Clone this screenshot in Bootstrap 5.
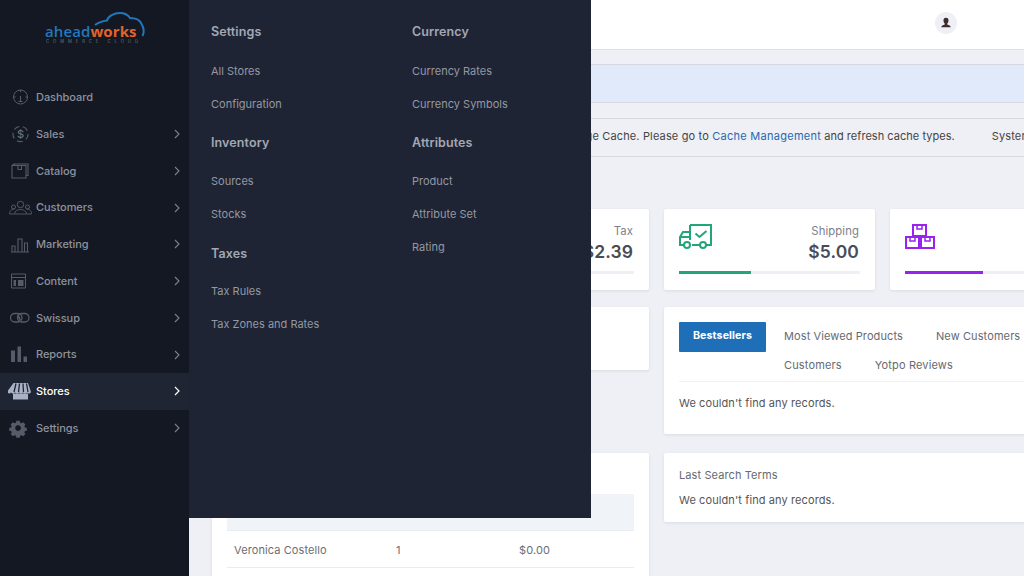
<!DOCTYPE html>
<html lang="en">
<head>
<meta charset="utf-8">
<title>Dashboard</title>
<link href="https://cdn.jsdelivr.net/npm/bootstrap@5.3.0/dist/css/bootstrap.min.css" rel="stylesheet">
<style>
html,body{height:100%;overflow:hidden}
body{font-family:Inter,"Liberation Sans",sans-serif;background:#eef0f5;color:#555;font-size:11px;width:1024px;height:576px;position:relative;letter-spacing:.1px}
.side-rail{width:189px;height:576px;background:#141822;color:#8e929e}
.logo-box{height:79px;padding:10px 0 0 43px}
.logo-box svg{display:block}
.rail-item{height:36.75px;padding-left:36px;padding-right:8px;position:relative;font-size:11px;font-weight:500;letter-spacing:-.05px}
.rail-item.on{background:#1f2533;color:#fff}
.rail-ico{position:absolute;left:8px;top:50%;transform:translateY(-50%);width:24px;height:24px}
.chev{margin-left:auto;width:8px;height:10px}
.fly-menu{position:absolute;left:189px;top:0;width:402px;height:518px;background:#1e2433;z-index:5;padding:0 22px}
.fly-col{width:201px;flex:none}
.fly-head{font-size:12.5px;font-weight:600;color:#a4a8b4;height:38px;line-height:37px}
.fly-head.first{height:62px;line-height:64px;margin-bottom:-7.5px}
.fly-link{height:33px;line-height:33px;color:#9498a3;font-size:11px;white-space:nowrap;letter-spacing:0}
.fly-head.mid{margin-top:3px;margin-bottom:3px}
.fly-head.third{line-height:39px}
.work{position:absolute;left:189px;top:0;width:835px;overflow:hidden;height:576px}
.top-strip{height:50px;background:#fff;border-bottom:1px solid #dfe1e6;position:relative}
.avatar{position:absolute;left:746px;top:12px;width:22px;height:22px;border-radius:50%;background:#eef0f5}
.note{height:39px;line-height:35px;border-top:1px solid #d6d9df;border-bottom:1px solid #d6d9df;white-space:nowrap;font-size:11px;color:#444;overflow:hidden}
.note.blue{background:#e0eafb;margin-top:14px;margin-bottom:15px}
.note a{color:#2668b0;text-decoration:none;letter-spacing:.27px}
.note-run{padding-left:383px;letter-spacing:.15px}
.note-tail{letter-spacing:.03px}
.note-sys{margin-left:37px}
.stats{display:grid;grid-template-columns:repeat(4,211px);gap:15px;margin:52px 0 17px 23px;height:81px}
.pane{background:#fff;border-radius:2px;box-shadow:0 1px 3px rgba(40,50,70,.1);border:0}
.stat{padding:15px;height:81px;display:flex;flex-direction:column}
.stat-top{height:47px;display:flex;justify-content:space-between}
.stat-lbl{font-size:11.3px;color:#80808a;line-height:15px;text-align:right;margin-right:1px}
.stat-val{font-size:17.5px;font-weight:600;color:#4a4c55;line-height:26px;text-align:right;margin-right:1px}
.meter{height:3px;background:#eff0f5}
.meter div{height:3px}
.twin{display:grid;grid-template-columns:437px 437px;gap:15px;margin-left:23px}
.tab-on{background:#1f6fb8;color:#fff;font-weight:700;width:87px;height:30px;line-height:28px;text-align:center;border-radius:1px;flex:none;font-size:10.7px}
.tab-list{padding-left:18px;width:335px;column-gap:33px}
.tab-list span{height:29px;line-height:27px;color:#666a72;white-space:nowrap}
.tab-list span.a1{height:30px;line-height:28px}
.tab-list span.a2{letter-spacing:.15px}
.tbl{width:407px;margin:41px 15px 0 15px;table-layout:fixed;font-size:11px}
.tbl th{background:#f0f3f8;height:36px;font-weight:500;padding:0 7px;color:#777;border-bottom:1px solid #e9ecf2}
.tbl td{height:37px;padding:3px 7px 0;color:#6d6d74;border-bottom:1px solid #e9ecf2}
.rec-line{border-top:1px solid #f0f1f4;padding-top:13px;line-height:16px;color:#555}
.search-pane{height:69px;padding:15px;margin-top:4px}
.search-title{line-height:15px;color:#666a72}
.search-text{line-height:16px;margin-top:9px;color:#555}
.tabs-pane{height:127px;padding:15px}
.first-pane{height:63px}
.orders-pane{height:200px;margin-top:4px}
</style>
</head>
<body>
<div class="d-flex">
<aside class="side-rail flex-shrink-0">
  <div class="logo-box">
    <svg width="104" height="36" viewBox="0 0 104 36">
      <path d="M52 15C56 12 60 11 64 10.500C65 6 71 3 77 3C82 3 85 5 87 8C92 8 97 10 98.500 14C101 18 101 23 99.500 26" fill="none" stroke="#1f78bd" stroke-width="2"/>
      <text x="2" y="26.500" font-family="'Open Sans',sans-serif" font-size="15" font-weight="600" fill="#2277bd">ahead<tspan fill="#e2632c" font-weight="700">works</tspan></text>
      <text x="3" y="32.800" font-family="Inter,sans-serif" font-size="4.200" fill="#6d7480" textLength="92">COMMERCE CLOUD</text>
    </svg>
  </div>
  <ul class="list-unstyled m-0">
    <li class="rail-item d-flex align-items-center">
      <svg class="rail-ico" viewBox="0 0 24 24" fill="none" stroke="#555b68"><circle cx="12.500" cy="12" r="7"/><path d="M12.500 5v2M5.500 12h2M17.500 12h2M12.500 11v5M10.500 16.500h4" stroke-width="1.100"/></svg>Dashboard</li>
    <li class="rail-item d-flex align-items-center">
      <svg class="rail-ico" viewBox="0 0 24 24" fill="none" stroke="#555b68"><circle cx="12.500" cy="12" r="7.600" stroke-dasharray="6 3.500" stroke-width="1.200"/><text x="12.500" y="16" font-size="11" text-anchor="middle" fill="#6a707c" stroke="none" font-family="Inter,sans-serif">$</text></svg>Sales<svg class="chev" viewBox="0 0 8 10" fill="none" stroke="#7d818c" stroke-width="1.100"><path d="M2 1l4 4-4 4"/></svg></li>
    <li class="rail-item d-flex align-items-center">
      <svg class="rail-ico" viewBox="0 0 24 24" fill="none" stroke="#555b68" stroke-width="1.100"><path d="M4 6.500h14v12.500H4zM6 6.500V5h14v11.500h-2M4 6.500L6 5M10 6.500v4h3.500v-4"/></svg>Catalog<svg class="chev" viewBox="0 0 8 10" fill="none" stroke="#7d818c" stroke-width="1.100"><path d="M2 1l4 4-4 4"/></svg></li>
    <li class="rail-item d-flex align-items-center">
      <svg class="rail-ico" viewBox="0 0 24 24" fill="none" stroke="#555b68"><circle cx="12.500" cy="8.500" r="3.200"/><circle cx="5.500" cy="11" r="2"/><circle cx="19.500" cy="11" r="2"/><path d="M6.500 18c0-6 12-6 12 0zM1.500 18c0-4 3-5 5-5M23.500 18c0-4-3-5-5-5M1.500 18h5M18.500 18h5" stroke-width=".9"/></svg>Customers<svg class="chev" viewBox="0 0 8 10" fill="none" stroke="#7d818c" stroke-width="1.100"><path d="M2 1l4 4-4 4"/></svg></li>
    <li class="rail-item d-flex align-items-center">
      <svg class="rail-ico" viewBox="0 0 24 24" fill="none" stroke="#555b68" stroke-width="1.100"><path d="M3 20h18M4 20v-6h3v6M10 20V7h4v13M16.500 20v-9h3v9"/></svg>Marketing<svg class="chev" viewBox="0 0 8 10" fill="none" stroke="#7d818c" stroke-width="1.100"><path d="M2 1l4 4-4 4"/></svg></li>
    <li class="rail-item d-flex align-items-center">
      <svg class="rail-ico" viewBox="0 0 24 24" fill="none" stroke="#555b68"><path d="M3.500 5h14v14h-14zM3.500 8.500h14"/><path d="M5.500 11h2.500v6H5.500zM10 11h5.500v6H10z" fill="#555b68" stroke="none"/></svg>Content<svg class="chev" viewBox="0 0 8 10" fill="none" stroke="#7d818c" stroke-width="1.100"><path d="M2 1l4 4-4 4"/></svg></li>
    <li class="rail-item d-flex align-items-center">
      <svg class="rail-ico" viewBox="0 0 24 24" fill="none" stroke="#555b68" stroke-width="1.300"><rect x="2.500" y="7.500" width="11.500" height="8.500" rx="4.200"/><rect x="9.500" y="7.500" width="11.500" height="8.500" rx="4.200"/><path d="M9.700 9c1.500 1.500 2.500 4 2.500 5.500z" fill="#555b68"/></svg>Swissup<svg class="chev" viewBox="0 0 8 10" fill="none" stroke="#7d818c" stroke-width="1.100"><path d="M2 1l4 4-4 4"/></svg></li>
    <li class="rail-item d-flex align-items-center">
      <svg class="rail-ico" viewBox="0 0 24 24" fill="#555b68"><path d="M3 7.500h4V19H3zM9.500 3.500h3.500V19H9.500zM15.500 13.500h3.500V19h-3.500z"/></svg>Reports<svg class="chev" viewBox="0 0 8 10" fill="none" stroke="#7d818c" stroke-width="1.100"><path d="M2 1l4 4-4 4"/></svg></li>
    <li class="rail-item on d-flex align-items-center">
      <svg class="rail-ico" viewBox="0 0 24 24" fill="#a9b1c4"><path d="M5 4h14.500l3 9c-1 2-3 2-4 .5-1 1.500-3 1.500-4 0-1 1.500-3 1.500-4 0-1 1.500-3 1.500-4 0-1 1.500-3 1.500-4 0-1 1.500-3 1-4-.5z" transform="translate(.5 0)"/><path d="M5 14.500h15v6H5z"/><path d="M8 4.500L6 13M11.500 4.500L10.500 13M15 4.500L15.500 13M18.500 4.500L20 13" stroke="#1f2533" stroke-width="1.300"/></svg>Stores<svg class="chev" viewBox="0 0 8 10" fill="none" stroke="#fff" stroke-width="1.200"><path d="M2 1l4 4-4 4"/></svg></li>
    <li class="rail-item d-flex align-items-center">
      <svg class="rail-ico" viewBox="0 0 24 24" fill="#555b68"><path fill-rule="evenodd" d="M10 3.500h4l.5 2.400 1.700.7 2.100-1.300 2.700 2.800-1.300 2 .7 1.700 2.400.5v3.400l-2.400.5-.7 1.700 1.300 2-2.700 2.700-2.100-1.300-1.700.7-.5 2.400h-4l-.5-2.400-1.700-.7-2.100 1.300-2.700-2.700 1.300-2-.7-1.700-2.400-.5v-3.400l2.400-.5.7-1.700-1.300-2 2.700-2.800 2.100 1.300 1.700-.7zM12 9a3.500 3.500 0 1 0 .01 0z" transform="translate(.2 1.800) scale(.82)"/></svg>Settings<svg class="chev" viewBox="0 0 8 10" fill="none" stroke="#7d818c" stroke-width="1.100"><path d="M2 1l4 4-4 4"/></svg></li>
  </ul>
</aside>
</div>

<nav class="fly-menu d-flex">
  <div class="fly-col">
    <div class="fly-head first">Settings</div>
    <div class="fly-link">All Stores</div>
    <div class="fly-link">Configuration</div>
    <div class="fly-head mid">Inventory</div>
    <div class="fly-link">Sources</div>
    <div class="fly-link">Stocks</div>
    <div class="fly-head mid third">Taxes</div>
    <div class="fly-link">Tax Rules</div>
    <div class="fly-link">Tax Zones and Rates</div>
  </div>
  <div class="fly-col">
    <div class="fly-head first">Currency</div>
    <div class="fly-link">Currency Rates</div>
    <div class="fly-link">Currency Symbols</div>
    <div class="fly-head mid">Attributes</div>
    <div class="fly-link">Product</div>
    <div class="fly-link">Attribute Set</div>
    <div class="fly-link">Rating</div>
  </div>
</nav>

<main class="work">
  <header class="top-strip">
    <div class="avatar d-flex align-items-center justify-content-center">
      <svg width="12" height="12" viewBox="0 0 12 12" fill="#3a2f2c"><path d="M6 .8c1.800 0 2.600 1.300 2.500 3-.1 1.300-.6 2.200-1.200 2.800v.9c1 .5 3.300.9 3.500 2.800H1.200c.2-1.900 2.500-2.300 3.500-2.800v-.9C4.100 6 3.600 5.100 3.500 3.800 3.400 2.100 4.200.8 6 .8z"/></svg>
    </div>
  </header>
  <div class="note blue"></div>
  <div class="note"><div class="note-run">Page Cache. Please go to <a href="#">Cache Management</a><span class="note-tail"> and refresh cache types.</span><span class="note-sys">System</span></div></div>

  <section class="stats">
    <div class="pane stat"></div>
    <div class="pane stat">
      <div class="stat-top"><div></div><div><div class="stat-lbl">Tax</div><div class="stat-val">$2.39</div></div></div>
      <div class="meter"></div>
    </div>
    <div class="pane stat">
      <div class="stat-top">
        <svg width="33" height="25" viewBox="0 0 33 25" fill="none" stroke="#22a57a" stroke-width="2"><path d="M11 1h21v20h-5M21 21h-8M11 1v15M5 21H1v-8l3-5h7M1 13h10"/><circle cx="8" cy="21" r="3"/><circle cx="24" cy="21" r="3"/><path d="M16.500 9.500l4 3.500 7-6"/></svg>
        <div><div class="stat-lbl">Shipping</div><div class="stat-val">$5.00</div></div>
      </div>
      <div class="meter"><div style="width:40%;background:#22a57a"></div></div>
    </div>
    <div class="pane stat">
      <div class="stat-top">
        <svg width="30" height="25" viewBox="0 0 30 25" fill="none" stroke="#9a22ee" stroke-width="2"><path d="M8 1h13v11H8zM1 13h13v11H1zM16 13h13v11H16z"/><path d="M12 1v4h5V1M5 13v4h5v-4M20 13v4h5v-4" stroke-width="1.500"/></svg>
        <div></div>
      </div>
      <div class="meter"><div style="width:43.3%;background:#9a22ee"></div></div>
    </div>
  </section>

  <section class="twin">
    <div class="pane first-pane"></div>
    <div class="pane tabs-pane">
      <div class="d-flex">
        <div class="tab-on">Bestsellers</div>
        <div class="tab-list d-flex flex-wrap">
          <span class="a1">Most Viewed Products</span><span class="a1">New Customers</span><span class="a2">Customers</span><span class="a2">Yotpo Reviews</span>
        </div>
      </div>
      <div class="rec-line">We couldn't find any records.</div>
    </div>
    <div class="pane orders-pane">
      <table class="tbl"><thead><tr><th>Customer</th><th style="width:123px">Items</th><th style="width:122px">Total</th></tr></thead>
      <tbody><tr><td>Veronica Costello</td><td>1</td><td>$0.00</td></tr></tbody></table>
    </div>
    <div class="pane search-pane">
      <div class="search-title">Last Search Terms</div>
      <div class="search-text">We couldn't find any records.</div>
    </div>
  </section>
</main>
<script src="https://cdn.jsdelivr.net/npm/bootstrap@5.3.0/dist/js/bootstrap.bundle.min.js"></script>
</body>
</html>
